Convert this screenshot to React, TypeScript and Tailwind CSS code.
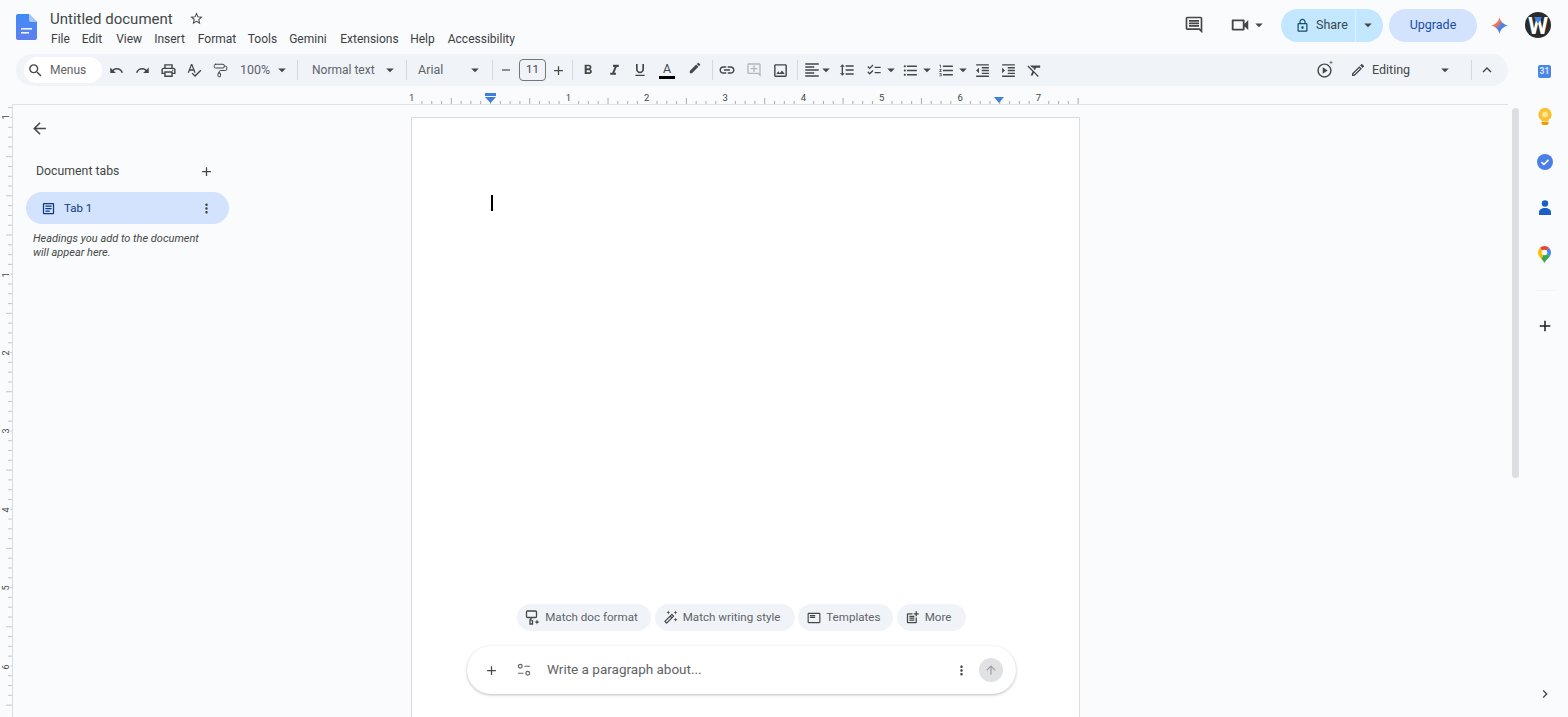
import type { ReactNode } from 'react';
import { PaintRoller } from 'lucide-react';
import {
  MdAdd,
  MdArrowBack,
  MdArrowDropDown,
  MdArrowUpward,
  MdChecklist,
  MdEdit,
  MdExpandLess,
  MdFormatAlignLeft,
  MdFormatBold,
  MdFormatClear,
  MdFormatIndentDecrease,
  MdFormatIndentIncrease,
  MdFormatItalic,
  MdFormatLineSpacing,
  MdFormatListBulleted,
  MdFormatListNumbered,
  MdFormatUnderlined,
  MdKeyboardArrowRight,
  MdLink,
  MdMoreVert,
  MdOutlineAddComment,
  MdOutlineArticle,
  MdOutlineAutoFixHigh,
  MdOutlineComment,
  MdOutlineEdit,
  MdOutlineFeaturedPlayList,
  MdOutlineImage,
  MdOutlineLock,
  MdOutlinePlayCircle,
  MdOutlinePostAdd,
  MdOutlinePrint,
  MdOutlineVideocam,
  MdRedo,
  MdRemove,
  MdSearch,
  MdSpellcheck,
  MdStarOutline,
  MdUndo,
} from 'react-icons/md';

const INCH = 78.35;
const TICK = INCH / 8;

// ── Small drawings ─────────────────────────────────────────────────────────────

function DocsLogo() {
  return (
    <svg width="21" height="26" viewBox="0 0 21 26" className="shrink-0">
      <defs>
        <linearGradient id="docs" x1="0" y1="0" x2="0" y2="1">
          <stop offset="0" stopColor="#3f8cf5" />
          <stop offset="1" stopColor="#5f80ee" />
        </linearGradient>
      </defs>
      <path d="M2 0h11l8 8v16a2 2 0 0 1-2 2H2a2 2 0 0 1-2-2V2a2 2 0 0 1 2-2z" fill="url(#docs)" />
      <path d="M13 0l8 8h-6a2 2 0 0 1-2-2z" fill="#a9c8fa" />
      <rect x="5" y="14" width="11" height="1.6" fill="#fff" opacity="0.9" />
      <rect x="5" y="18" width="8" height="1.6" fill="#fff" opacity="0.9" />
    </svg>
  );
}

function GeminiStar() {
  return (
    <svg width="17" height="17" viewBox="0 0 18 18">
      <defs>
        <linearGradient id="gem" x1="0" y1="0" x2="1" y2="1">
          <stop offset="0" stopColor="#f6a93b" />
          <stop offset="0.38" stopColor="#e8785a" />
          <stop offset="0.58" stopColor="#4a7ff0" />
          <stop offset="1" stopColor="#2fa88f" />
        </linearGradient>
      </defs>
      <path d="M9 0c1 4.600 3.400 7.400 9 9-5.600 1.600-8 4.400-9 9-1-4.600-3.400-7.400-9-9 5.600-1.600 8-4.400 9-9z" fill="url(#gem)" />
    </svg>
  );
}

function Avatar() {
  return (
    <div className="relative flex h-[26px] w-[26px] items-center justify-center overflow-hidden rounded-full bg-[#2b2b2b]">
      <span className="mt-[2px] text-[23px] font-bold leading-none text-white">W</span>
      <svg width="8" height="7" viewBox="0 0 8 7" className="absolute left-[9px] top-[5px]">
        <path d="M0 0h8L4 7z" fill="#3b82e6" />
      </svg>
    </div>
  );
}

function CalendarIcon() {
  return (
    <div className="flex h-[13px] w-[13px] items-center justify-center rounded-[2px] bg-[#4a86e8] text-[8.5px] font-bold leading-none text-[#dbe8fd]">
      31
    </div>
  );
}

function KeepIcon() {
  return (
    <svg width="14" height="17" viewBox="0 0 14 17">
      <path d="M7 0a6.500 6.500 0 0 1 3.500 12v1.500h-7V12A6.500 6.500 0 0 1 7 0z" fill="#fbc02d" />
      <path d="M3.500 14h7v.8A2 2 0 0 1 8.500 17h-3a2 2 0 0 1-2-2.200z" fill="#f29900" />
      <circle cx="7" cy="6.500" r="3" fill="#fde293" />
    </svg>
  );
}

function TasksIcon() {
  return (
    <svg width="16" height="16" viewBox="0 0 16 16">
      <circle cx="8" cy="8" r="8" fill="#4a7fe8" />
      <path d="M4.500 8.200l2.400 2.300 4.600-4.600" stroke="#fff" strokeWidth="1.600" fill="none" />
    </svg>
  );
}

function ContactsIcon() {
  return (
    <svg width="12" height="15" viewBox="0 0 12 15">
      <circle cx="6" cy="3.500" r="3.200" fill="#1a5fc8" />
      <path d="M0 15v-2.500C0 9.500 2.500 8 6 8s6 1.500 6 4.500V15z" fill="#1a5fc8" />
    </svg>
  );
}

function MapsIcon() {
  return (
    <svg width="13" height="17" viewBox="0 0 13 17">
      <path d="M6.500 17C5 13.500 0 11 0 6.500a6.500 6.500 0 0 1 2-4.700l4.500 4.700z" fill="#fbbc04" />
      <path d="M2 1.800A6.500 6.500 0 0 1 6.500 0c1.900 0 3.500.8 4.700 2L6.500 6.500z" fill="#ea4335" />
      <path d="M11.200 2A6.500 6.500 0 0 1 13 6.500c0 1.400-.5 2.600-1.200 3.700L6.500 6.500z" fill="#4285f4" />
      <path d="M11.800 10.200C10.300 12.500 7.500 14.500 6.500 17c-.6-1.400-1.700-2.700-2.800-4l2.800-6.500z" fill="#34a853" />
      <circle cx="6.500" cy="6.500" r="2.800" fill="#fff" />
    </svg>
  );
}

function TuneIcon() {
  return (
    <svg width="14" height="14" viewBox="0 0 15 15" fill="none" stroke="#5f6368" strokeWidth="1.300">
      <circle cx="3.500" cy="3.500" r="2" />
      <path d="M8 3.500h6M1 11h6" />
      <circle cx="11.500" cy="11" r="2" />
    </svg>
  );
}

function MatchFormatIcon() {
  return (
    <svg width="15" height="15" viewBox="0 0 15 15" fill="none" stroke="#444746" strokeWidth="1.300">
      <rect x="1.500" y="1" width="10" height="6.500" rx="1" />
      <path d="M6 7.500v2.500H5v4h2.500v-4" />
      <path d="M12 9.500l.7 1.800 1.800.7-1.800.7-.7 1.800-.7-1.800-1.800-.7 1.800-.7z" fill="#444746" stroke="none" />
    </svg>
  );
}

// ── Toolbar bits ───────────────────────────────────────────────────────────────

function Btn({ children, w = 'w-[26px]', className = '' }: { children: ReactNode; w?: string; className?: string }) {
  return (
    <div className={`flex h-full shrink-0 items-center justify-center text-[#444746] ${w} ${className}`}>{children}</div>
  );
}

function Sep({ className = '' }: { className?: string }) {
  return <div className={`h-[20px] w-px shrink-0 bg-[#d5d9dd] ${className}`} />;
}

function Caret({ className = '' }: { className?: string }) {
  return <MdArrowDropDown size={18} className={`shrink-0 text-[#444746] ${className}`} />;
}

function Toolbar() {
  return (
    <div className="ml-4 flex h-8 w-[1492px] items-center rounded-full bg-[#f0f4f9] pl-2 text-[12.5px] text-[#444746]">
      <div className="flex h-[26px] w-[78px] shrink-0 items-center rounded-full bg-white pl-[3px]">
        <MdSearch size={17} className="text-[#444746]" />
        <span className="ml-[6px] text-[12px] text-[#5f6368]">Menus</span>
      </div>
      <Btn className="ml-px"><MdUndo size={15} /></Btn>
      <Btn><MdRedo size={15} /></Btn>
      <Btn><MdOutlinePrint size={17} /></Btn>
      <Btn><MdSpellcheck size={16} /></Btn>
      <Btn><PaintRoller size={15} strokeWidth={1.6} /></Btn>
      <div className="flex w-[64px] shrink-0 items-center pl-[7px] text-[#5f6368]">
        <span>100%</span>
        <Caret className="ml-[3px]" />
      </div>
      <Sep />
      <div className="flex w-[108px] shrink-0 items-center pl-[14px] text-[12px] text-[#5f6368]">
        <span>Normal text</span>
        <Caret className="ml-[6px]" />
      </div>
      <Sep />
      <div className="flex w-[85px] shrink-0 items-center pl-[11px] text-[#5f6368]">
        <span>Arial</span>
        <Caret className="ml-[23px]" />
      </div>
      <Sep />
      <Btn><MdRemove size={14} /></Btn>
      <div className="flex h-[22px] w-[27px] shrink-0 items-center justify-center rounded-[4px] border border-[#747775] text-[11.500px]">
        11
      </div>
      <Btn w="w-[25px]"><MdAdd size={15} /></Btn>
      <Sep className="ml-px" />
      <Btn className="ml-[2px]"><MdFormatBold size={16} /></Btn>
      <Btn><MdFormatItalic size={17} /></Btn>
      <Btn><MdFormatUnderlined size={16} /></Btn>
      <Btn className="ml-px flex-col">
        <span className="text-[12.500px] leading-[13px]">A</span>
        <span className="mt-[1px] h-[3px] w-4 bg-black" />
      </Btn>
      <Btn className="ml-[2px]"><MdEdit size={14} className="-mt-1" /></Btn>
      <Sep className="ml-1" />
      <Btn className="ml-[1px]"><MdLink size={18} /></Btn>
      <Btn className="ml-px"><MdOutlineAddComment size={16} className="text-[#b4b8bb]" /></Btn>
      <Btn><MdOutlineImage size={17} /></Btn>
      <Sep className="ml-1" />
      <div className="ml-[5px] flex shrink-0 items-center">
        <MdFormatAlignLeft size={18} />
        <Caret className="-ml-[4px]" />
      </div>
      <Btn className="-ml-px"><MdFormatLineSpacing size={16} /></Btn>
      <div className="ml-[6px] flex shrink-0 items-center">
        <MdChecklist size={16} />
        <Caret />
      </div>
      <div className="ml-[2px] flex shrink-0 items-center">
        <MdFormatListBulleted size={17} />
        <Caret className="-ml-px" />
      </div>
      <div className="ml-[2px] flex shrink-0 items-center">
        <MdFormatListNumbered size={17} />
        <Caret className="-ml-px" />
      </div>
      <Btn className="-ml-[3px]"><MdFormatIndentDecrease size={17} /></Btn>
      <Btn><MdFormatIndentIncrease size={17} /></Btn>
      <Btn><MdFormatClear size={17} /></Btn>

      <div className="ml-auto flex h-full items-center">
        <div className="relative mr-[17px] flex">
          <MdOutlinePlayCircle size={17} />
          <span className="absolute -right-[1px] -top-[1px] h-[5px] w-[5px] bg-[#f0f4f9] text-[7px] leading-[5px]">+</span>
        </div>
        <MdOutlineEdit size={16} />
        <span className="ml-[6px] w-[64px]">Editing</span>
        <Caret className="mr-[17px]" />
        <Sep />
        <Btn w="w-[29px]"><MdExpandLess size={18} /></Btn>
        <div className="w-[7px]" />
      </div>
    </div>
  );
}

// ── Rulers ─────────────────────────────────────────────────────────────────────

function HorizontalRuler() {
  const ticks = Array.from({ length: 69 }, (_, i) => i - 8);
  const labels = [[-1, 1], [1, 1], [2, 2], [3, 3], [4, 4], [5, 5], [6, 6], [7, 7]];
  return (
    <div className="ml-3 h-[19px] w-[1496px] border-b border-[#dfe3e8]">
      <svg width="669" height="18" viewBox="0 0 669 18" className="ml-[399px] block overflow-visible">
        {ticks.map((i) => {
          const x = 79 + (i * TICK);
          if (i % 8 === 0 && i !== 0) return null;
          const h = i % 4 === 0 ? 6 : 3;
          return <rect key={i} x={x} y={18 - h} width="1" height={h} fill="#a9adb1" />;
        })}
        {labels.map(([pos, n]) => (
          <text
            key={pos}
            x={79 + pos * INCH}
            y="15"
            textAnchor="middle"
            fontSize="9.500"
            fill="#444746"
            fontFamily="Roboto, sans-serif"
          >
            {n}
          </text>
        ))}
        <rect x="74" y="7" width="11" height="3" fill="#3f7fdc" />
        <path d="M74 11h11l-5.500 6z" fill="#3f7fdc" />
        <path d="M583 11h10l-5 6z" fill="#3f7fdc" />
      </svg>
    </div>
  );
}

function VerticalRuler() {
  const ticks = Array.from({ length: 62 }, (_, i) => i);
  const labels = [[12, 1], [170, 1], [248, 2], [326, 3], [405, 4], [483, 5], [562, 6]];
  return (
    <div className="h-full w-[13px] shrink-0 border-r border-[#dadce0]">
      <svg width="12" height="612" viewBox="0 0 12 612" className="block overflow-visible">
        {ticks.map((i) => {
          const y = 12 + i * TICK - 9.8;
          const major = (i - 1) % 4 === 0;
          return <rect key={i} x={major ? 6 : 8} y={y} width={major ? 6 : 4} height="1" fill="#c4c7ca" />;
        })}
        {labels.map(([y, n]) => (
          <g key={y} transform={`translate(8.5 ${y}) rotate(-90)`}>
            <rect x="-4" y="-8" width="8" height="10" fill="#f9fbfd" />
            <text textAnchor="middle" fontSize="9" fill="#444746" fontFamily="Roboto, sans-serif">
              {n}
            </text>
          </g>
        ))}
      </svg>
    </div>
  );
}

// ── Sidebar ────────────────────────────────────────────────────────────────────

function Sidebar() {
  return (
    <aside className="flex w-[398px] shrink-0 flex-col text-[#444746]">
      <MdArrowBack size={19} className="ml-[17px] mt-[14px] text-[#444746]" />
      <div className="ml-[23px] mt-[23px] flex w-[178px] items-center justify-between">
        <span className="text-[12.300px] leading-5">Document tabs</span>
        <MdAdd size={15} />
      </div>
      <div className="ml-[13px] mt-[11px] flex h-8 w-[203px] items-center rounded-full bg-[#d3e3fd] pl-[15px] pr-[15px] text-[#0b3a80]">
        <MdOutlineArticle size={15} />
        <span className="ml-[8px] pt-px text-[11.500px]">Tab 1</span>
        <MdMoreVert size={15} className="ml-auto text-[#444746]" />
      </div>
      <p className="ml-[20px] mt-[8px] w-[180px] text-[11px] italic leading-[14px] text-[#444746]">
        Headings you add to the document will appear here.
      </p>
    </aside>
  );
}

// ── Composer over the page ─────────────────────────────────────────────────────

function Chip({ icon, label, w }: { icon: ReactNode; label: string; w: string }) {
  return (
    <div className={`flex h-[27px] items-center rounded-full bg-[#f0f4f9] pl-[8px] text-[11.600px] text-[#5f6368] ${w}`}>
      <span className="flex w-[15px] justify-center text-[#444746]">{icon}</span>
      <span className="ml-[5px] whitespace-nowrap">{label}</span>
    </div>
  );
}

function Composer() {
  return (
    <div className="absolute left-[55px] top-[486px] flex w-[549px] flex-col items-center">
      <div className="flex items-center gap-[3.5px]">
        <Chip icon={<MatchFormatIcon />} label="Match doc format" w="w-[134px]" />
        <Chip icon={<MdOutlineAutoFixHigh size={15} />} label="Match writing style" w="w-[140px]" />
        <Chip icon={<MdOutlineFeaturedPlayList size={14} />} label="Templates" w="w-[95px]" />
        <Chip icon={<MdOutlinePostAdd size={15} />} label="More" w="w-[69px]" />
      </div>
      <div className="mt-[15px] flex h-[48px] w-full items-center rounded-full bg-white pl-[17px] pr-[13px] shadow-[0_1px_3px_rgba(60,64,67,0.35)]">
        <MdAdd size={15} className="text-[#444746]" />
        <span className="ml-[18px] flex"><TuneIcon /></span>
        <span className="-mt-px ml-[16px] text-[13.500px] text-[#5f6368]">Write a paragraph about...</span>
        <MdMoreVert size={15} className="ml-auto text-[#444746]" />
        <div className="ml-[10px] flex h-[24px] w-[24px] items-center justify-center rounded-full bg-[#dfe1e3]">
          <MdArrowUpward size={14} className="text-[#9a9da0]" />
        </div>
      </div>
    </div>
  );
}

// ── Page ───────────────────────────────────────────────────────────────────────

export default function App() {
  return (
    <div
      className="flex h-[717px] w-[1568px] flex-col overflow-hidden bg-[#f9fbfd] text-[#1f1f1f]"
      style={{ fontFamily: 'Roboto, "Noto Sans", sans-serif' }}
    >
      {/* Top bar */}
      <header className="flex h-[54px] shrink-0 items-center">
        <div className="ml-[16px] flex">
          <DocsLogo />
        </div>
        <div className="ml-[13px] flex flex-col">
          <div className="flex h-[23px] items-center pt-px">
            <span className="text-[15px] leading-5 text-[#444746]">Untitled document</span>
            <MdStarOutline size={15} className="ml-[16px] text-[#444746]" />
          </div>
          <nav className="flex h-[18px] items-center pl-px text-[12px] text-[#3c4043]">
            <span className="mr-[12px]">File</span>
            <span className="mr-[14px]">Edit</span>
            <span className="mr-[12px]">View</span>
            <span className="mr-[13px]">Insert</span>
            <span className="mr-[11.500px]">Format</span>
            <span className="mr-[12px]">Tools</span>
            <span className="mr-[13.500px]">Gemini</span>
            <span className="mr-[11.500px]">Extensions</span>
            <span className="mr-[13px]">Help</span>
            <span>Accessibility</span>
          </nav>
        </div>

        <div className="mb-1 ml-auto flex items-center">
          <MdOutlineComment size={20} className="text-[#444746]" />
          <MdOutlineVideocam size={22} className="ml-[25px] text-[#444746]" />
          <Caret className="-ml-[1px]" />
          <div className="ml-[13px] flex h-[33px] w-[102px] items-center rounded-full bg-[#c2e7ff] text-[12.500px] text-[#37474f]">
            <MdOutlineLock size={15} className="ml-[14px] text-[#174f6e]" />
            <span className="ml-[6px]">Share</span>
            <div className="ml-[7px] h-full w-px bg-[#dcf1ff]" />
            <Caret className="ml-[3px]" />
          </div>
          <div className="ml-[6px] flex h-[33px] w-[88px] items-center justify-center rounded-full bg-[#d3e3fd] text-[12.500px] text-[#174ea6]">
            Upgrade
          </div>
          <div className="ml-[14px] flex">
            <GeminiStar />
          </div>
          <div className="ml-[17px] mr-[17px]">
            <Avatar />
          </div>
        </div>
      </header>

      <div className="flex min-h-0 flex-1">
        <div className="flex w-[1520px] shrink-0 flex-col">
          <Toolbar />
          <HorizontalRuler />

          <div className="flex min-h-0 flex-1">
            <VerticalRuler />
            <Sidebar />

            {/* Document page */}
            <div className="relative mt-3 w-[669px] shrink-0 border-x border-t border-[#dadce0] bg-white pl-[79px] pt-[77px]">
              <div className="h-4 w-[2px] bg-black" />
              <Composer />
            </div>

            <div className="flex-1 pl-[432px] pt-[3px]">
              <div className="h-[370px] w-[7px] rounded-full bg-[#dcdfe2]" />
            </div>
          </div>
        </div>

        {/* Side rail */}
        <aside className="flex flex-1 flex-col items-center pl-px">
          <div className="mt-[11px] flex h-[13px] items-center"><CalendarIcon /></div>
          <div className="mt-[30px] flex h-[17px] items-center"><KeepIcon /></div>
          <div className="mt-[29px] flex h-4 items-center"><TasksIcon /></div>
          <div className="mt-[30px] flex h-[15px] items-center"><ContactsIcon /></div>
          <div className="mt-[31px] flex h-[17px] items-center"><MapsIcon /></div>
          <div className="mt-[27px] h-px w-5 bg-[#f1f3f4]" />
          <MdAdd size={18} className="mt-[26px] text-[#1f1f1f]" />
          <MdKeyboardArrowRight size={16} className="mb-[15px] mt-auto text-[#444746]" />
        </aside>
      </div>
    </div>
  );
}
